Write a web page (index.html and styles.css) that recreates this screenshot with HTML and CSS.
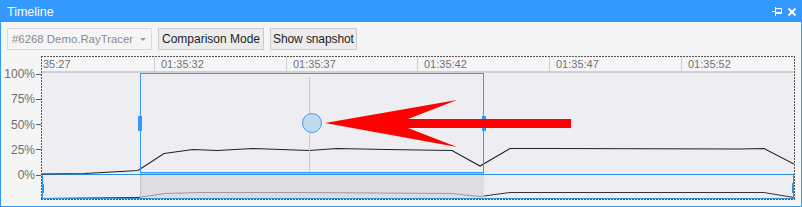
FILE: index.html
```html
<!DOCTYPE html>
<html>
<head>
<meta charset="utf-8">
<link rel="stylesheet" href="styles.css">
</head>
<body>
<div class="window">
  <div class="titlebar">
    <span class="title">Timeline</span>
    <div class="title-icons">
      <svg class="ico" width="10" height="9" viewBox="0 0 10 9">
        <path d="M0 4.5H3.5M3.5 0V9M3.5 1.5H9.5V6.5H3.5M3.5 5.5H9.5" stroke="#fff" stroke-width="1" fill="none"/>
      </svg>
      <svg class="ico" width="8" height="8" viewBox="0 0 8 8">
        <path d="M0.5 0.5L7.5 7.5M7.5 0.5L0.5 7.5" stroke="#fff" stroke-width="2" fill="none"/>
      </svg>
    </div>
  </div>
  <div class="content">
    <div class="toolbar">
      <div class="combo"><span class="combo-text">#6268 Demo.RayTracer</span><span class="caret"></span></div>
      <button class="btn">Comparison Mode</button>
      <button class="btn btn-tight">Show snapshot</button>
    </div>
    <div class="chart">
      <div class="yaxis">
        <div class="ylabel"><span>100%</span><i class="tick"></i></div>
        <div class="ylabel"><span>75%</span><i class="tick"></i></div>
        <div class="ylabel"><span>50%</span><i class="tick"></i></div>
        <div class="ylabel"><span>25%</span><i class="tick"></i></div>
        <div class="ylabel"><span>0%</span><i class="tick"></i></div>
      </div>
      <div class="plotbox">
        <div class="ruler">
          <div class="cell cell-first">35:27</div>
          <div class="cell w132">01:35:32</div>
          <div class="cell w131">01:35:37</div>
          <div class="cell w132">01:35:42</div>
          <div class="cell w132">01:35:47</div>
          <div class="cell cell-last">01:35:52</div>
        </div>
        <svg class="plot" width="752" height="126" viewBox="42 73 752 126">
          <defs>
            <clipPath id="outside">
              <rect x="42" y="174" width="98" height="25"/>
              <rect x="484" y="174" width="310" height="25"/>
            </clipPath>
            <clipPath id="inside">
              <rect x="140" y="174" width="344" height="25"/>
            </clipPath>
          </defs>
          <rect x="42" y="73" width="752" height="126" fill="#eeeef2"/>
          <rect x="140" y="175" width="344" height="23" fill="#dddddf"/>
          <line x1="140.5" y1="175" x2="140.5" y2="198" stroke="#c8c8c8"/>
          <polyline clip-path="url(#outside)" points="42,198.5 83,198 138,197.5 165,193.5 200,192.5 300,192.5 452,193.5 480,196.5 510,192.5 550,192.5 764,192.5 794,197.5" fill="none" stroke="#333" stroke-width="1"/>
          <polyline clip-path="url(#inside)" points="42,198.5 83,198 138,197.5 165,193.5 200,192.5 300,192.5 452,193.5 480,196.5 510,192.5 550,192.5 764,192.5 794,197.5" fill="none" stroke="#9a9a9a" stroke-width="1"/>
          <rect x="42.5" y="174.5" width="751" height="24" fill="none" stroke="#2d93e6" stroke-width="1"/>
          <rect x="42" y="184" width="2" height="9" fill="#2d93e6"/>
          <rect x="792" y="183" width="2" height="10" fill="#2d93e6"/>
          <polyline points="42,174 85,173.5 138,170.5 164,153.5 193,149.5 217,150.5 253,148.5 309,150.5 337,148.5 387,149.5 452,150.5 480,166 510,148.5 550,148.5 740,149 764,148.5 794,164" fill="none" stroke="#222" stroke-width="1.1"/>
          <line x1="309.5" y1="77" x2="309.5" y2="173" stroke="#cbcbcb" stroke-width="1"/>
          <rect x="140.5" y="73.5" width="343" height="99" fill="none" stroke="#3399ff" stroke-width="1"/>
          <line x1="140" y1="173" x2="484" y2="173" stroke="#3399ff" stroke-width="1"/>
          <rect x="138" y="116" width="4" height="15" fill="#3399ff"/>
          <rect x="482" y="116" width="4" height="15" fill="#3399ff"/>
          <circle cx="312" cy="123" r="9.5" fill="#c2daee" stroke="#3c9cf5" stroke-width="1"/>
          <polygon points="325,123 457,100 408,119 571,119 571,128 408,128 457,147" fill="#ff0000"/>
        </svg>
      </div>
    </div>
  </div>
</div>
</body>
</html>
```
FILE: styles.css
```css
* { box-sizing: border-box; }
html, body { margin: 0; padding: 0; }
body {
  width: 802px;
  height: 207px;
  overflow: hidden;
  font-family: "Liberation Sans", Arial, sans-serif;
  font-size: 12px;
  background: #f5f5f5;
}
.window {
  width: 802px;
  height: 207px;
  border: 1px solid #3399ff;
  border-top: 0;
  background: #f5f5f5;
  display: flex;
  flex-direction: column;
}
.titlebar {
  height: 22px;
  margin: 0 -1px;
  background: #3399ff;
  color: #fff;
  display: flex;
  align-items: center;
  justify-content: space-between;
  padding: 0 6px 0 7px;
}
.title {
  font-size: 12.5px;
  line-height: 22px;
  padding-top: 1px;
}
.title-icons {
  display: flex;
  align-items: center;
  gap: 6px;
  padding-top: 1px;
}
.ico { display: block; }
.content {
  flex: 1;
  padding: 6px 0 0 0;
  display: flex;
  flex-direction: column;
}
.toolbar {
  display: flex;
  gap: 6px;
  height: 22px;
  padding-left: 6px;
}
.combo {
  width: 145px;
  height: 22px;
  border: 1px solid #dadada;
  background: #f5f5f5;
  color: #8b8b8b;
  display: flex;
  align-items: center;
  padding-left: 4px;
  position: relative;
  font-size: 11.4px;
}
.combo-text { white-space: nowrap; }
.caret {
  position: absolute;
  right: 5px;
  top: 9px;
  width: 0;
  height: 0;
  border-left: 3px solid transparent;
  border-right: 3px solid transparent;
  border-top: 3px solid #9a9a9a;
}
.btn {
  height: 22px;
  border: 1px solid #cccccc;
  background: #ececec;
  color: #1e1e1e;
  font-family: "Liberation Sans", Arial, sans-serif;
  font-size: 12px;
  padding: 0 3px;
  margin: 0;
  line-height: 20px;
  white-space: nowrap;
}
.btn-tight { padding: 0 2px; letter-spacing: -0.1px; }
.chart {
  margin-top: 6px;
  display: grid;
  grid-template-columns: 40px 754px;
}
.yaxis {
  padding-top: 5.4px;
  display: flex;
  flex-direction: column;
}
.ylabel {
  height: 25.25px;
  display: flex;
  align-items: center;
  justify-content: flex-end;
  color: #6e6e6e;
  font-size: 12px;
}
.tick {
  display: block;
  width: 5px;
  height: 1px;
  background: #555;
  margin-left: 1px;
}
.plotbox {
  width: 754px;
  height: 144px;
  padding: 1px;
  background:
    repeating-linear-gradient(90deg, #555 0 2px, transparent 2px 3px) top left / 100% 1px no-repeat,
    repeating-linear-gradient(90deg, #555 0 2px, transparent 2px 3px) bottom left / 100% 1px no-repeat,
    repeating-linear-gradient(180deg, #555 0 2px, transparent 2px 3px) top left / 1px 100% no-repeat,
    repeating-linear-gradient(180deg, #555 0 2px, transparent 2px 3px) top right / 1px 100% no-repeat,
    #f5f5f5;
  display: flex;
  flex-direction: column;
}
.ruler {
  height: 16px;
  border-bottom: 2px solid #d0d0d8;
  background: #f5f5f5;
  display: flex;
  overflow: hidden;
  font-size: 11px;
  color: #727272;
  line-height: 14px;
}
.cell {
  flex: none;
  white-space: nowrap;
  overflow: hidden;
  border-left: 1px solid #cfcfcf;
  padding-left: 6px;
}
.cell-first { width: 112px; border-left: 0; padding-left: 1px; }
.w132 { width: 132px; }
.w131 { width: 131px; }
.cell-last { flex: 1; }
.plot { display: block; }
```
